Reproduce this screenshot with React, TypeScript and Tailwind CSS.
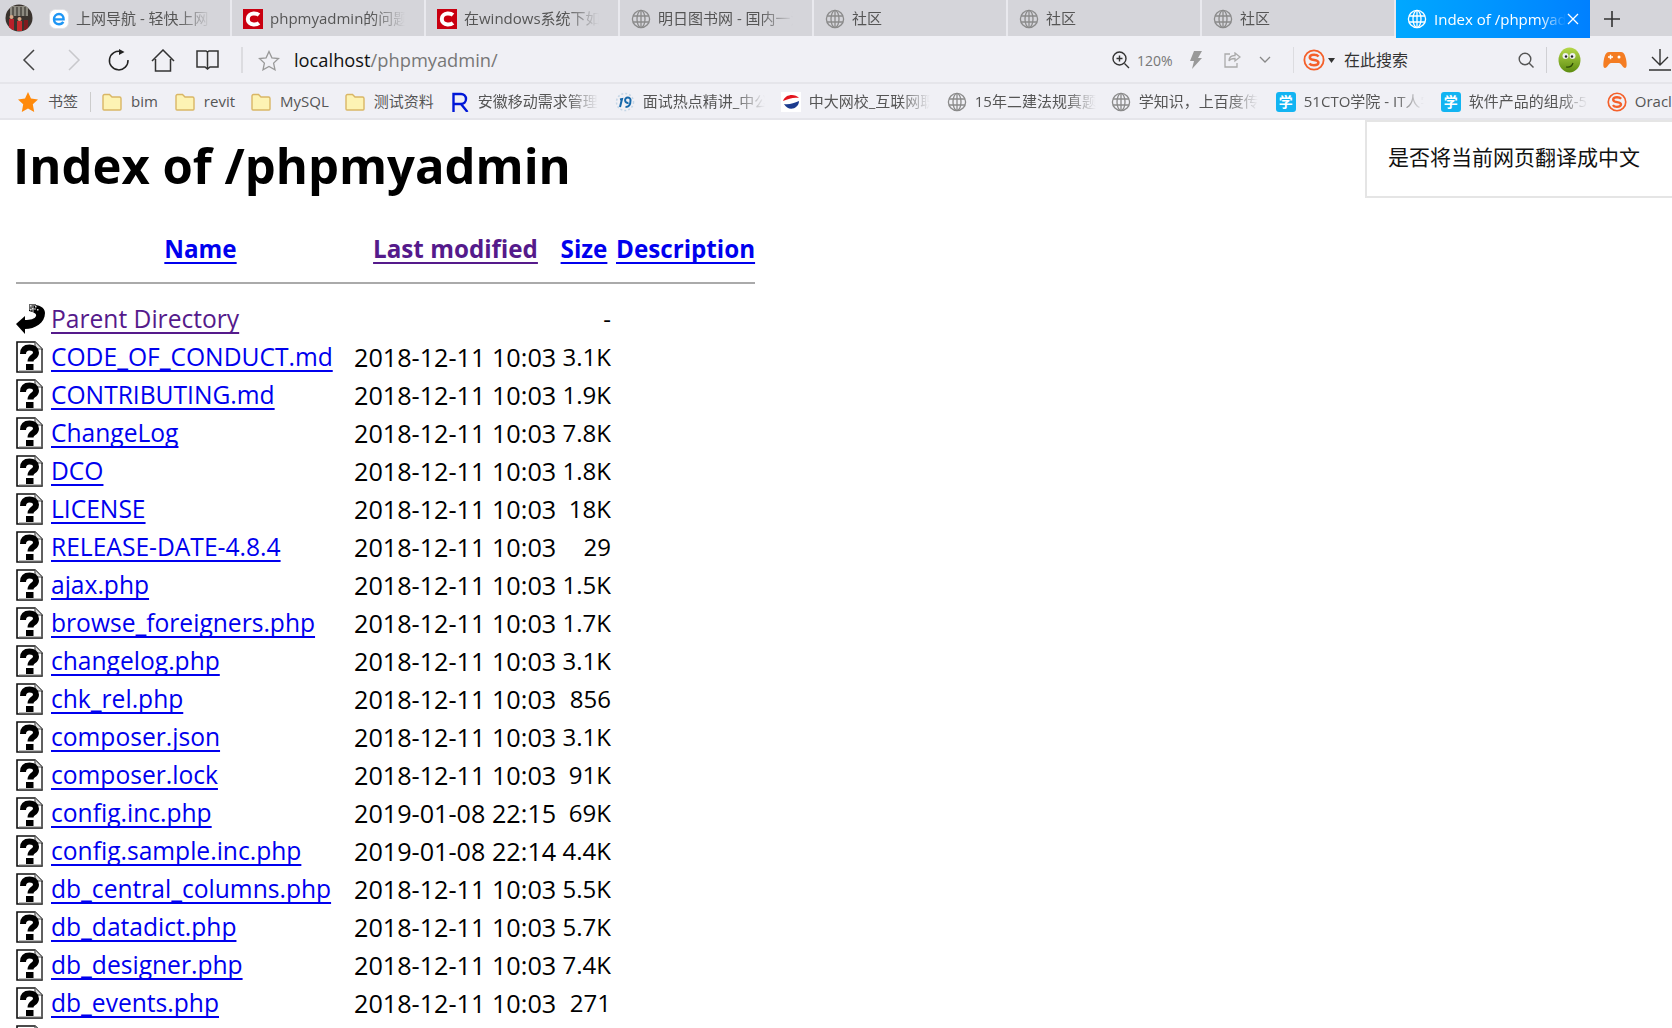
import type { ReactNode } from "react";

const fade = "[mask-image:linear-gradient(to_right,black_75%,transparent)] overflow-hidden whitespace-nowrap";
const link = "underline decoration-2 underline-offset-[4px] [text-decoration-skip-ink:none]";

const Globe = ({ color = "#8a8a8a", size = 20 }: { color?: string; size?: number }) => (
  <svg width={size} height={size} viewBox="0 0 20 20" fill="none" stroke={color} strokeWidth="1.3" className="shrink-0">
    <circle cx="10" cy="10" r="8.6" />
    <ellipse cx="10" cy="10" rx="4" ry="8.6" />
    <path d="M10 1.4v17.2M2 7h16M2 13h16" />
  </svg>
);

const CIcon = () => (
  <svg width="20" height="20" viewBox="0 0 20 20" className="shrink-0">
    <rect width="20" height="20" fill="#c90010" />
    <path d="M16 6C14.500 4.800 12.500 4.500 10.400 4.600 7.200 4.800 4.800 6.800 4.800 10s2.400 5.200 5.600 5.400c2.100.1 4.100-.2 5.600-1.400" fill="none" stroke="#fff" strokeWidth="4" />
  </svg>
);

const IeIcon = () => (
  <svg width="20" height="20" viewBox="0 0 20 20" className="shrink-0">
    <rect x="0.5" y="0.5" width="19" height="19" rx="6" fill="#fff" stroke="#e2e2e6" />
    <path d="M5 10.400h9.600C14.600 7 12.800 5 10 5s-5 2.200-5 5.300 2.100 5 5 5c2 0 3.400-.8 4.300-2.400" fill="none" stroke="#1e96f5" strokeWidth="2.400" />
  </svg>
);

const Tab = ({ icon, label, wide = false }: { icon: ReactNode; label: string; wide?: boolean }) => (
  <div className={`flex h-9 items-center border-r-2 border-[#e9e9ee] pl-[11px] pt-px ${wide ? "w-[195px]" : "w-[194px]"}`}>
    {icon}
    <span className={`ml-[7px] w-[135px] text-[15px] text-[#555] ${fade}`}>{label}</span>
  </div>
);

const Folder = () => (
  <svg width="20" height="18" viewBox="0 0 20 18" className="shrink-0">
    <path d="M1 16V3a1.500 1.500 0 0 1 1.500-1.500h5L10 4h7.500A1.500 1.500 0 0 1 19 5.500V16a1 1 0 0 1-1 1H2a1 1 0 0 1-1-1z" fill="#fdf3b4" stroke="#d9b665" strokeWidth="1.400" />
  </svg>
);

const Xue = () => (
  <div className="flex h-5 w-5 shrink-0 items-center justify-center rounded-[3px] bg-[#12b4f2] text-[14px] font-bold leading-none text-white">学</div>
);

const SIcon = ({ size = 20 }: { size?: number }) => (
  <svg width={size} height={size} viewBox="0 0 24 24" fill="none" className="shrink-0">
    <circle cx="12" cy="12" r="10.500" stroke="#f4602a" strokeWidth="2" />
    <path d="M17 8.200C15.800 6.800 14 6.300 12 6.300c-2.500 0-4.600 1.200-4.600 3 0 4 9.400 1.600 9.400 5.500 0 1.900-2.100 3-4.800 3-2.100 0-4-.7-5-2.100" stroke="#f4602a" strokeWidth="2.800" />
  </svg>
);

const Bookmark = ({ icon, label, width }: { icon: ReactNode; label: string; width: number }) => (
  <div className="flex shrink-0 items-center" style={{ width: width + 28 }}>
    {icon}
    <span className={`ml-2 text-[15px] text-[#555] ${fade}`} style={{ width }}>
      {label}
    </span>
  </div>
);

const QuestionIcon = () => (
  <svg width="27" height="32" viewBox="0 0 27 32" className="block">
    <path d="M1 1h18l7 7v23H1z" fill="#fff" stroke="#111" strokeWidth="1.600" />
    <path d="M3 30h23V9" fill="none" stroke="#777" strokeWidth="1.200" />
    <path d="M19 1v7h7" fill="#ddd" stroke="#555" strokeWidth="1.200" />
    <path d="M7 13C7 8.500 9.500 6.500 13.500 6.500s6.500 2 6.500 5.200c0 4.600-5.500 3.900-5.500 8.800" fill="none" stroke="#000" strokeWidth="6" />
    <rect x="10" y="23" width="7.500" height="6" fill="#000" />
  </svg>
);

const BackIcon = () => (
  <svg width="30" height="30" viewBox="0 0 30 30" className="block">
    <path d="M0 20L9 12v4c5 0 10-1 11-4 1-2-2-4-7-5V1c7-1 16 1 16 8 0 10-10 16-20 16v5z" fill="#000" />
    <path d="M13 0h7v2h-2v2h2v2h-2v2h-2V6h-3z" fill="#666" />
    <path d="M14 1h1.500v1.500H14zM16 4h1.500v1.500H16zM19 2h1.500v1.500H19zM14 5h1.500v1.500H14zM21 5h1.500v1.500H21z" fill="#ddd" />
  </svg>
);

const files: [string, string, string][] = [
  ["CODE_OF_CONDUCT.md", "2018-12-11 10:03", "3.1K"],
  ["CONTRIBUTING.md", "2018-12-11 10:03", "1.9K"],
  ["ChangeLog", "2018-12-11 10:03", "7.8K"],
  ["DCO", "2018-12-11 10:03", "1.8K"],
  ["LICENSE", "2018-12-11 10:03", "18K"],
  ["RELEASE-DATE-4.8.4", "2018-12-11 10:03", "29"],
  ["ajax.php", "2018-12-11 10:03", "1.5K"],
  ["browse_foreigners.php", "2018-12-11 10:03", "1.7K"],
  ["changelog.php", "2018-12-11 10:03", "3.1K"],
  ["chk_rel.php", "2018-12-11 10:03", "856"],
  ["composer.json", "2018-12-11 10:03", "3.1K"],
  ["composer.lock", "2018-12-11 10:03", "91K"],
  ["config.inc.php", "2019-01-08 22:15", "69K"],
  ["config.sample.inc.php", "2019-01-08 22:14", "4.4K"],
  ["db_central_columns.php", "2018-12-11 10:03", "5.5K"],
  ["db_datadict.php", "2018-12-11 10:03", "5.7K"],
  ["db_designer.php", "2018-12-11 10:03", "7.4K"],
  ["db_events.php", "2018-12-11 10:03", "271"],
  ["db_export.php", "2018-12-11 10:03", "6.3K"],
];

const App = () => {
  return (
    <div className="h-[1028px] w-[1672px] overflow-hidden bg-white font-['Open_Sans','Noto_Sans_CJK_SC',sans-serif]">
      {/* tab strip */}
      <div className="flex h-9 items-start bg-[#d5d5da]">
        <div className="flex h-9 w-[37px] items-center pl-[5px]">
          <svg width="28" height="28" viewBox="0 0 28 28">
            <defs>
              <clipPath id="av"><circle cx="14" cy="14" r="13.500" /></clipPath>
            </defs>
            <g clipPath="url(#av)">
              <rect width="28" height="28" fill="#3a332e" />
              <rect x="5" y="2" width="18" height="10" fill="#8d8a80" />
              <path d="M8 3v9M12 3v9M16 3v9M20 3v9" stroke="#4a4640" strokeWidth="1.500" />
              <rect x="4" y="15" width="5" height="11" fill="#b8202a" />
              <rect x="12" y="17" width="5" height="10" fill="#c62a2c" />
              <rect x="19" y="16" width="4" height="10" fill="#7e1a1e" />
              <circle cx="6.500" cy="13" r="2" fill="#d8a888" />
              <circle cx="14.500" cy="15" r="2" fill="#d8a888" />
            </g>
          </svg>
        </div>
        <div className="flex h-9 w-[195px] items-center border-r-2 border-[#e9e9ee] pl-[12px] pt-px">
          <IeIcon />
          <span className={`ml-[7px] w-[135px] text-[15px] text-[#555] ${fade}`}>上网导航 - 轻快上网</span>
        </div>
        <Tab icon={<CIcon />} label="phpmyadmin的问题" />
        <Tab icon={<CIcon />} label="在windows系统下如何" />
        <Tab icon={<Globe />} label="明日图书网 - 国内一流" />
        <Tab icon={<Globe />} label="社区" />
        <Tab icon={<Globe />} label="社区" />
        <Tab icon={<Globe />} label="社区" />
        <div className="z-10 flex h-[38px] w-[194px] items-center bg-gradient-to-r from-[#00a8ff] to-[#0080ff] pl-[11px]">
          <Globe color="#fff" />
          <span className="ml-[7px] w-[132px] overflow-hidden whitespace-nowrap text-[15px] text-white [mask-image:linear-gradient(to_right,black_80%,transparent)]">
            Index of /phpmyadmin
          </span>
          <svg width="12" height="12" viewBox="0 0 12 12" stroke="#fff" strokeWidth="1.300" className="ml-[1px]">
            <path d="M1 1l10 10M11 1L1 11" />
          </svg>
        </div>
        <svg width="16" height="16" viewBox="0 0 16 16" stroke="#333" strokeWidth="1.600" className="ml-[14px] mt-[11px]">
          <path d="M8 0v16M0 8h16" />
        </svg>
      </div>

      {/* address bar */}
      <div className="flex h-12 items-center border-b-2 border-[#e5e5ea] bg-[#f0f0f5] pl-[22px] pt-[2px]">
        <svg width="13" height="22" viewBox="0 0 13 22" fill="none" stroke="#444" strokeWidth="1.500"><path d="M12 1L2 11l10 10" /></svg>
        <svg width="13" height="22" viewBox="0 0 13 22" fill="none" stroke="#c8c8cc" strokeWidth="1.500" className="ml-[33px]"><path d="M1 1l10 10L1 21" /></svg>
        <svg width="22" height="22" viewBox="0 0 22 22" fill="none" stroke="#222" strokeWidth="1.500" className="ml-[27px]">
          <path d="M13.500 2.700A9.300 9.300 0 1 0 20 11" />
          <path d="M11 0l5.500 3L11 6z" fill="#222" stroke="none" />
        </svg>
        <svg width="24" height="23" viewBox="0 0 24 23" fill="none" stroke="#333" strokeWidth="1.500" className="ml-[21px]">
          <path d="M1 12L12 1l11 11M4.500 10v12h15V10" />
        </svg>
        <svg width="23" height="22" viewBox="0 0 23 22" fill="none" stroke="#333" strokeWidth="1.500" className="ml-[21px]">
          <path d="M1 2h9l1.500 1L13 2h9v16h-8l-2.500 2L9 18H1zM11.500 3v17" />
        </svg>
        <div className="ml-[22px] h-[26px] w-[2px] bg-[#dcdce0]" />
        <svg width="22" height="21" viewBox="0 0 22 21" fill="none" stroke="#999" strokeWidth="1.300" className="ml-[15px]">
          <path d="M11 1.500l2.900 6.300 6.600.7-4.900 4.600 1.400 6.700-6-3.400-6 3.400 1.400-6.700L1.500 8.500l6.600-.7z" />
        </svg>
        <div className="ml-[14px] w-[818px] whitespace-nowrap text-[18.300px] text-[#777]">
          <span className="text-[#111]">localhost</span>/phpmyadmin/
        </div>
        <svg width="18" height="18" viewBox="0 0 18 18" fill="none" stroke="#333" strokeWidth="1.400">
          <circle cx="7.500" cy="7.500" r="6.500" /><path d="M12.500 12.500L17 17M7.500 4.500v6M4.500 7.500h6" />
        </svg>
        <span className="ml-[7px] w-[40px] text-[14px] text-[#777]">120%</span>
        <svg width="12" height="18" viewBox="0 0 12 18" fill="#999" className="ml-[13px]"><path d="M4 0h8L8 7h4L2 18l2-8H0z" /></svg>
        <svg width="17" height="16" viewBox="0 0 17 16" fill="none" stroke="#aaa" strokeWidth="1.300" className="ml-[22px]">
          <path d="M6 2H1v13h12v-4M5 9c0-4 3-5.500 6-5.500V1l5 4-5 4V6.500C8 6.500 6 7 5 9z" />
        </svg>
        <svg width="12" height="8" viewBox="0 0 12 8" fill="none" stroke="#888" strokeWidth="1.300" className="ml-[18px]"><path d="M1 1l5 5 5-5" /></svg>
        <div className="ml-[22px] h-[26px] w-[1px] bg-[#dcdce0]" />
        <div className="ml-[9px]"><SIcon size={22} /></div>
        <svg width="7" height="5" viewBox="0 0 7 5" fill="#333" className="ml-[3px]"><path d="M0 0h7L3.500 5z" /></svg>
        <span className="ml-[9px] w-[174px] text-[16px] text-[#333]">在此搜索</span>
        <svg width="16" height="16" viewBox="0 0 16 16" fill="none" stroke="#555" strokeWidth="1.400"><circle cx="7" cy="7" r="5.800" /><path d="M11 11l4.500 4.500" /></svg>
        <div className="ml-[12px] h-[26px] w-[1px] bg-[#d0d0d4]" />
        <svg width="23" height="26" viewBox="0 0 23 26" className="ml-[11px]">
          <defs>
            <linearGradient id="frog" x1="0" y1="0" x2="0" y2="1"><stop offset="0" stopColor="#b6d84a" /><stop offset="1" stopColor="#5d8c10" /></linearGradient>
          </defs>
          <ellipse cx="11.500" cy="13" rx="11" ry="12.500" fill="url(#frog)" />
          <circle cx="7.500" cy="9" r="3" fill="#eee" /><circle cx="14.500" cy="9" r="3" fill="#eee" />
          <circle cx="8" cy="9.500" r="1.200" fill="#222" /><circle cx="14" cy="9.500" r="1.200" fill="#222" />
          <path d="M8 20c3 .5 6-.5 7-4" fill="none" stroke="#2d4a05" strokeWidth="1.200" />
        </svg>
        <svg width="24" height="18" viewBox="0 0 24 18" className="ml-[22px]">
          <path d="M6 1h12c3 0 4 3 5 7 1 5 1 9-1 9s-4-5-6-5H8c-2 0-4 5-6 5s-2-4-1-9c1-4 2-7 5-7z" fill="#f47c22" />
          <path d="M5 6h5M7.500 3.800v4.500" stroke="#fff" strokeWidth="1.500" /><circle cx="16" cy="6" r="1.500" fill="#fff" />
        </svg>
        <svg width="22" height="22" viewBox="0 0 22 22" fill="none" stroke="#333" strokeWidth="1.400" className="ml-[22px] shrink-0">
          <path d="M11 0v15M3 8l8 8 8-8M0 21h22" />
        </svg>
      </div>

      {/* bookmarks */}
      <div className="flex h-[36px] items-center overflow-hidden border-b-2 border-[#e5e5ea] bg-[#f0f0f5] pl-[18px] pt-px">
        <svg width="20" height="20" viewBox="0 0 20 20" fill="#ff8a0c" className="shrink-0"><path d="M10 0l3 6.600 7 .8-5.200 4.800L16.200 20 10 16.400 3.800 20l1.400-7.800L0 7.400l7-.8z" /></svg>
        <span className="ml-[10px] w-[30px] shrink-0 whitespace-nowrap text-[15px] text-[#555]">书签</span>
        <div className="ml-[12px] mr-[11px] h-5 w-[1px] shrink-0 bg-[#ccc]" />
        <div className="mr-[17px] flex shrink-0 items-center"><Folder /><span className="ml-[9px] text-[15px] text-[#555]">bim</span></div>
        <div className="mr-[16px] flex shrink-0 items-center"><Folder /><span className="ml-[9px] text-[15px] text-[#555]">revit</span></div>
        <div className="mr-[16px] flex shrink-0 items-center"><Folder /><span className="ml-[9px] text-[15px] text-[#555]">MySQL</span></div>
        <div className="mr-[16px] flex shrink-0 items-center"><Folder /><span className="ml-[9px] text-[15px] text-[#555]">测试资料</span></div>
        <div className="mr-[17px]">
          <Bookmark width={120} label="安徽移动需求管理平台" icon={
            <svg width="20" height="20" viewBox="0 0 20 20" className="shrink-0" fill="none" stroke="#0018d8" strokeWidth="2.400"><path d="M3.500 20V2h7.500a4.800 4.800 0 0 1 0 10H3.500M11 12l6.500 8" /></svg>
          } />
        </div>
        <div className="mr-[16px]">
          <Bookmark width={122} label="面试热点精讲_中公教育" icon={
            <svg width="20" height="20" viewBox="0 0 20 20" className="shrink-0"><circle cx="10" cy="10" r="8.500" fill="none" stroke="#c5d6e6" strokeWidth="1.500" strokeDasharray="2 2" /><path d="M5 15l2-8-2 .5M10.500 15c3.500 0 5-3 5-6.500a2.700 2.700 0 1 0-2 2.300" fill="none" stroke="#1668aa" strokeWidth="2" /></svg>
          } />
        </div>
        <div className="mr-[17px]">
          <Bookmark width={121} label="中大网校_互联网职业教育" icon={
            <svg width="20" height="20" viewBox="0 0 20 20" className="shrink-0"><rect width="20" height="20" fill="#fff" /><path d="M2 9C4 2 14 1 18 6c-6-1-10 1-16 3z" fill="#e3141c" /><path d="M3 12c5 1 10-1 15-3 0 8-11 11-15 3z" fill="#1c3b8e" /></svg>
          } />
        </div>
        <div className="mr-[15px]"><Bookmark width={121} label="15年二建法规真题及答案" icon={<Globe />} /></div>
        <div className="mr-[18px]"><Bookmark width={119} label="学知识，上百度传课堂" icon={<Globe />} /></div>
        <div className="mr-[17px]"><Bookmark width={120} label="51CTO学院 - IT人学习" icon={<Xue />} /></div>
        <div className="mr-[19px]"><Bookmark width={119} label="软件产品的组成-51CTO" icon={<Xue />} /></div>
        <div className="flex shrink-0 items-center"><SIcon /><span className="ml-2 text-[15px] text-[#555]">Oracle</span></div>
      </div>

      {/* directory listing */}
      <div className="relative">
        <div className="absolute right-0 top-0 flex h-[78px] w-[307px] items-center border-y-2 border-l-2 border-[#e5e5e5] bg-white pb-[2px] pl-[21px] text-[21px] text-[#111]">
          是否将当前网页翻译成中文
        </div>
        <h1 className="pl-[13px] pt-[10px] text-[49px] font-bold leading-[70px] text-black">Index of /phpmyadmin</h1>
        <table className="ml-[16px] mt-[30px] table-fixed border-collapse text-[24px] leading-[38px] text-black">
          <colgroup>
            <col className="w-[35px]" />
            <col className="w-[303px]" />
            <col className="w-[203px]" />
            <col className="w-[54px]" />
            <col className="w-[5px]" />
            <col className="w-[139px]" />
          </colgroup>
          <thead>
            <tr className="h-[38px] text-[24.200px] text-[#0000ee]">
              <th />
              <th className={`pr-[4px] font-bold ${link}`}>Name</th>
              <th className={`font-bold text-[#551a8b] ${link}`}>Last modified</th>
              <th className={`font-bold ${link}`}>Size</th>
              <th />
              <th className={`font-bold ${link}`}>Description</th>
            </tr>
            <tr className="h-8">
              <th colSpan={6} className="p-0"><div className="mb-[3px] h-[2px] w-full bg-[#aaaaaa]" /></th>
            </tr>
          </thead>
          <tbody>
            <tr className="h-[38px]">
              <td className="align-middle"><BackIcon /></td>
              <td className={`whitespace-nowrap text-[24.600px] text-[#551a8b] ${link}`}>Parent Directory</td>
              <td />
              <td className="text-right">-</td>
            </tr>
            {files.map(([name, date, size]) => (
              <tr key={name} className="h-[38px]">
                <td className="align-middle"><QuestionIcon /></td>
                <td className={`whitespace-nowrap text-[24.600px] text-[#0000ee] ${link}`}>{name}</td>
                <td className="whitespace-nowrap text-[25.200px]">{date}</td>
                <td className="text-right">{size}</td>
              </tr>
            ))}
          </tbody>
        </table>
      </div>
    </div>
  );
};

export default App;
